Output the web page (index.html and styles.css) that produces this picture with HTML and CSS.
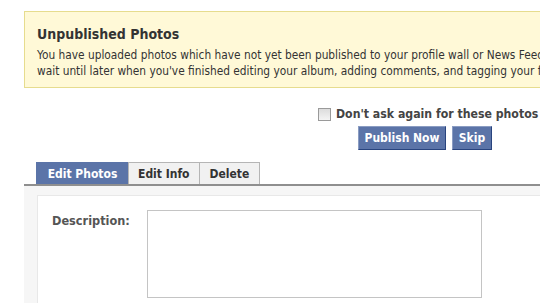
FILE: index.html
```html
<!DOCTYPE html>
<html>
<head>
<meta charset="utf-8">
<link rel="stylesheet" href="styles.css">
</head>
<body>
<div class="page">
  <div class="notice">
    <h2 class="notice-title">Unpublished Photos</h2>
    <p class="notice-text">You have uploaded photos which have not yet been published to your profile wall or News Feed.<br>wait until later when you've finished editing your album, adding comments, and tagging your friends.</p>
  </div>
  <div class="actions">
    <label class="dont-ask"><span class="checkbox"></span><span>Don't ask again for these photos</span></label>
    <div class="buttons">
      <span class="btn btn-wide">Publish Now</span>
      <span class="btn btn-skip">Skip</span>
    </div>
  </div>
  <div class="tabs">
    <span class="tab tab-active">Edit Photos</span>
    <span class="tab">Edit Info</span>
    <span class="tab tab-delete">Delete</span>
  </div>
  <div class="panel">
    <div class="inner">
      <div class="field">
        <span class="field-label">Description:</span>
        <div class="textarea"></div>
      </div>
    </div>
  </div>
</div>
</body>
</html>
```
FILE: styles.css
```css
html, body {
  margin: 0;
  padding: 0;
  background: #ffffff;
  overflow: hidden;
}
body {
  width: 540px;
  height: 303px;
  font-family: "DejaVu Sans Condensed", "DejaVu Sans", sans-serif;
  color: #333333;
}
.page {
  width: 640px;
  padding-left: 24px;
  padding-top: 11px;
}
.notice {
  background: #fff9d7;
  border: 1px solid #e6dc8e;
  padding: 14px 12px 8px 12px;
}
.notice-title {
  margin: 0 0 4px 0;
  font-size: 14px;
  line-height: 17px;
  font-weight: bold;
  color: #333333;
}
.notice-text {
  margin: 0;
  font-size: 11.8px;
  line-height: 16px;
  white-space: nowrap;
  color: #333333;
}
.actions {
  display: flex;
  flex-direction: column;
  margin-top: 18px;
}
.dont-ask {
  display: flex;
  align-items: center;
  margin-left: 294px;
  font-size: 12.2px;
  line-height: 17px;
  font-weight: bold;
  color: #444444;
  white-space: nowrap;
}
.checkbox {
  width: 11px;
  height: 11px;
  border: 1px solid #9a9a9a;
  background: linear-gradient(#dcdcdc, #f4f4f4);
  margin-right: 5px;
  flex: none;
}
.buttons {
  display: flex;
  gap: 6px;
  margin-top: 3px;
  margin-left: 334px;
}
.btn {
  display: flex;
  align-items: center;
  justify-content: center;
  box-sizing: border-box;
  height: 24px;
  padding: 0 8px;
  background: #5b74a8;
  border: 1px solid #29447e;
  border-top-color: #8a9cc2;
  border-left-color: #8a9cc2;
  color: #ffffff;
  font-size: 12px;
  font-weight: bold;
  white-space: nowrap;
}
.btn-wide {
  width: 88px;
}
.btn-skip {
  width: 40px;
  padding: 0;
}
.tabs {
  display: flex;
  margin-top: 12px;
  padding-left: 12px;
  border-bottom: 2px solid #8f8f8f;
}
.tab {
  display: flex;
  align-items: center;
  justify-content: center;
  height: 21px;
  padding: 0 9px;
  background: #f1f1f1;
  border: 1px solid #b5b5b5;
  border-bottom: none;
  margin-left: -1px;
  font-size: 12px;
  font-weight: bold;
  color: #333333;
}
.tab-delete {
  padding: 0 10px;
}
.tab-active {
  margin-left: 0;
  background: #5b74a8;
  border-color: #5b74a8;
  color: #ffffff;
  width: 73px;
}
.panel {
  background: #f6f6f6;
  padding: 9px 0 0 13px;
}
.inner {
  background: #ffffff;
  border: 1px solid #e8e8e8;
  height: 140px;
  padding: 14px 0 0 14px;
}
.field {
  display: flex;
}
.field-label {
  width: 95px;
  padding-top: 3px;
  font-size: 12.6px;
  line-height: 16px;
  font-weight: bold;
  color: #555555;
}
.textarea {
  width: 333px;
  height: 86px;
  border: 1px solid #c4c4c4;
  background: #ffffff;
}
```
